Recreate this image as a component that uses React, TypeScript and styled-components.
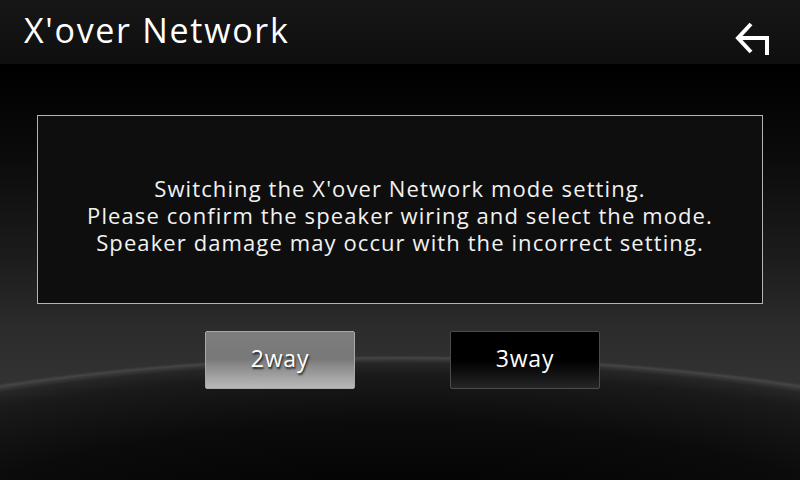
import React from "react";
import styled, { createGlobalStyle } from "styled-components";

const Global = createGlobalStyle`
  html, body { margin: 0; padding: 0; background: #000; }
  body { font-family: "Open Sans", "DejaVu Sans", sans-serif; }
`;

const Screen = styled.div`
  width: 800px;
  height: 480px;
  overflow: hidden;
  display: flex;
  flex-direction: column;
  background:
    radial-gradient(ellipse 720px 170px at 400px 528px,
      #030303 0%, #050505 30%, #0b0b0b 62%, #1a1a1a 90%, #262626 97%,
      #3a3a3a 99.2%, #454545 100%, rgba(60,60,60,0) 101.5%),
    linear-gradient(to bottom, #000 0px, #000 64px, #0a0a0a 150px, #1c1c1c 260px, #2c2c2c 330px, #343434 400px);
`;

const Header = styled.header`
  height: 64px;
  flex: none;
  display: flex;
  align-items: center;
  justify-content: space-between;
  padding: 0 28px 0 24px;
  background: linear-gradient(to bottom, #161616, #0f0f0f);
`;

const Title = styled.h1`
  margin: 0;
  font-family: "Open Sans", sans-serif;
  font-weight: 400;
  font-size: 34px;
  line-height: 1;
  color: #fff;
  letter-spacing: 1.7px;
  padding-bottom: 4px;
`;

const BackButton = styled.button`
  width: 38px;
  height: 38px;
  padding: 0;
  border: none;
  background: none;
  display: flex;
  margin-top: 12px;
`;

const Body = styled.main`
  flex: 1;
  display: flex;
  flex-direction: column;
  align-items: center;
`;

const MessageBox = styled.div`
  box-sizing: border-box;
  width: 726px;
  height: 189px;
  margin-top: 51px;
  border: 1px solid #b4b4b4;
  background: #0e0e0e;
  display: flex;
  align-items: center;
  justify-content: center;
  text-align: center;
`;

const Message = styled.p`
  margin: 0;
  padding-top: 12px;
  font-family: "Open Sans", sans-serif;
  font-size: 22px;
  line-height: 27px;
  letter-spacing: 1.1px;
  color: #f2f2f2;
`;

const ButtonRow = styled.div`
  display: flex;
  gap: 95px;
  margin-top: 27px;
  padding-left: 5px;
`;

const ModeButton = styled.button<{ $active?: boolean }>`
  box-sizing: border-box;
  width: 150px;
  height: 58px;
  border-radius: 2px;
  border: 1px solid ${(p) => (p.$active ? "#a8a8a8" : "#4c4c4c")};
  background: ${(p) =>
    p.$active
      ? "linear-gradient(to bottom, #7d7d7d 0%, #787878 48%, #8c8c8c 62%, #a8a8a8 85%, #b8b8b8 100%)"
      : "linear-gradient(to bottom, #000 0%, #000 50%, #141414 78%, #262626 100%)"};
  font-family: "Open Sans", sans-serif;
  font-size: 23px;
  letter-spacing: 0.8px;
  color: #fff;
  text-shadow: ${(p) => (p.$active ? "1px 2px 2px rgba(0,0,0,0.75)" : "none")};
  padding: 0 0 4px;
`;

const BackIcon = () => (
  <svg width="38" height="38" viewBox="0 0 38 38">
    <path
      d="M17 5 L4 19 L17 33 M4 19 H33 V36"
      fill="none"
      stroke="#fff"
      strokeWidth="4"
      strokeLinejoin="miter"
    />
  </svg>
);

export default function App() {
  return (
    <Screen>
      <Global />
      <Header>
        <Title>X'over Network</Title>
        <BackButton aria-label="Back">
          <BackIcon />
        </BackButton>
      </Header>
      <Body>
        <MessageBox>
          <Message>
            Switching the X'over Network mode setting.
            <br />
            Please confirm the speaker wiring and select the mode.
            <br />
            Speaker damage may occur with the incorrect setting.
          </Message>
        </MessageBox>
        <ButtonRow>
          <ModeButton $active>2way</ModeButton>
          <ModeButton>3way</ModeButton>
        </ButtonRow>
      </Body>
    </Screen>
  );
}
